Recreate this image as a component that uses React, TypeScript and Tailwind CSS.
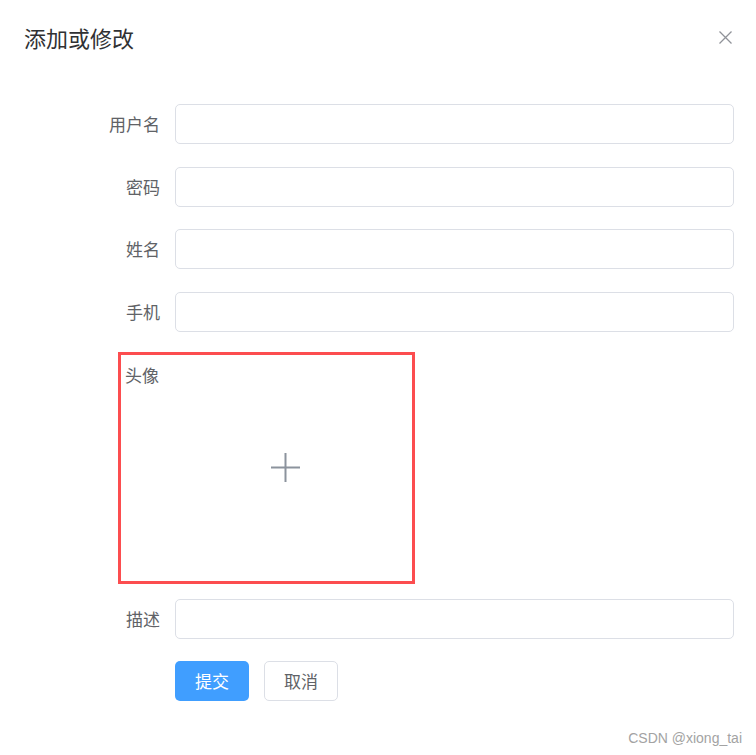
const fields = ["用户名", "密码", "姓名", "手机"];

const FormRow = ({ label }: { label: string }) => (
  <div className="flex items-center h-[40px] mb-[22.5px]">
    <label className="w-[175px] shrink-0 pr-[15px] text-right text-[17px] leading-[40px] text-[#606266]">
      {label}
    </label>
    <input className="flex-1 h-[40px] rounded-[5px] border border-[#dcdfe6] bg-white px-[15px] outline-none" />
  </div>
);

export default function App() {
  return (
    <div className="relative w-[756px] h-[755px] bg-white font-['Noto_Sans_CJK_SC','Noto_Sans',sans-serif]">
      <div className="flex items-center justify-between pl-[24px] pr-[24px] pt-[21px] h-[53px]">
        <span className="text-[22px] leading-[30px] text-[#303133]">添加或修改</span>
        <svg width="13" height="13" viewBox="0 0 13 13" className="mt-[1px]">
          <path d="M0.5 0.5l12 12M12.5 0.5l-12 12" stroke="#909399" strokeWidth="1.3" />
        </svg>
      </div>

      <div className="pt-[51px] pr-[22px]">
        {fields.map((f) => (
          <FormRow key={f} label={f} />
        ))}

        <div className="ml-[118px] mt-[-2px] mb-[15px] grid h-[232px] w-[297px] border-[3px] border-[#fc4d4f]">
          <span className="col-start-1 row-start-1 self-start pl-[4px] pt-[8px] text-[17px] leading-[24px] text-[#606266]">
            头像
          </span>
          <div className="col-start-1 row-start-1 self-center justify-self-start ml-[150px] mt-[-2px]">
            <svg width="29" height="29" viewBox="0 0 29 29">
              <path d="M14.5 0v29M0 14.5h29" stroke="#8c939d" strokeWidth="2" />
            </svg>
          </div>
        </div>

        <FormRow label="描述" />

        <div className="flex gap-[15px] pl-[175px] mt-[-1px]">
          <button className="h-[40px] w-[74px] rounded-[5px] bg-[#409eff] text-[17px] text-white">
            提交
          </button>
          <button className="h-[40px] w-[74px] rounded-[5px] border border-[#dcdfe6] bg-white text-[17px] text-[#606266]">
            取消
          </button>
        </div>
      </div>

      <span className="absolute right-[14px] bottom-[6px] font-['Liberation_Sans',sans-serif] text-[14px] text-[#a3a3a3]">
        CSDN @xiong_tai
      </span>
    </div>
  );
}
